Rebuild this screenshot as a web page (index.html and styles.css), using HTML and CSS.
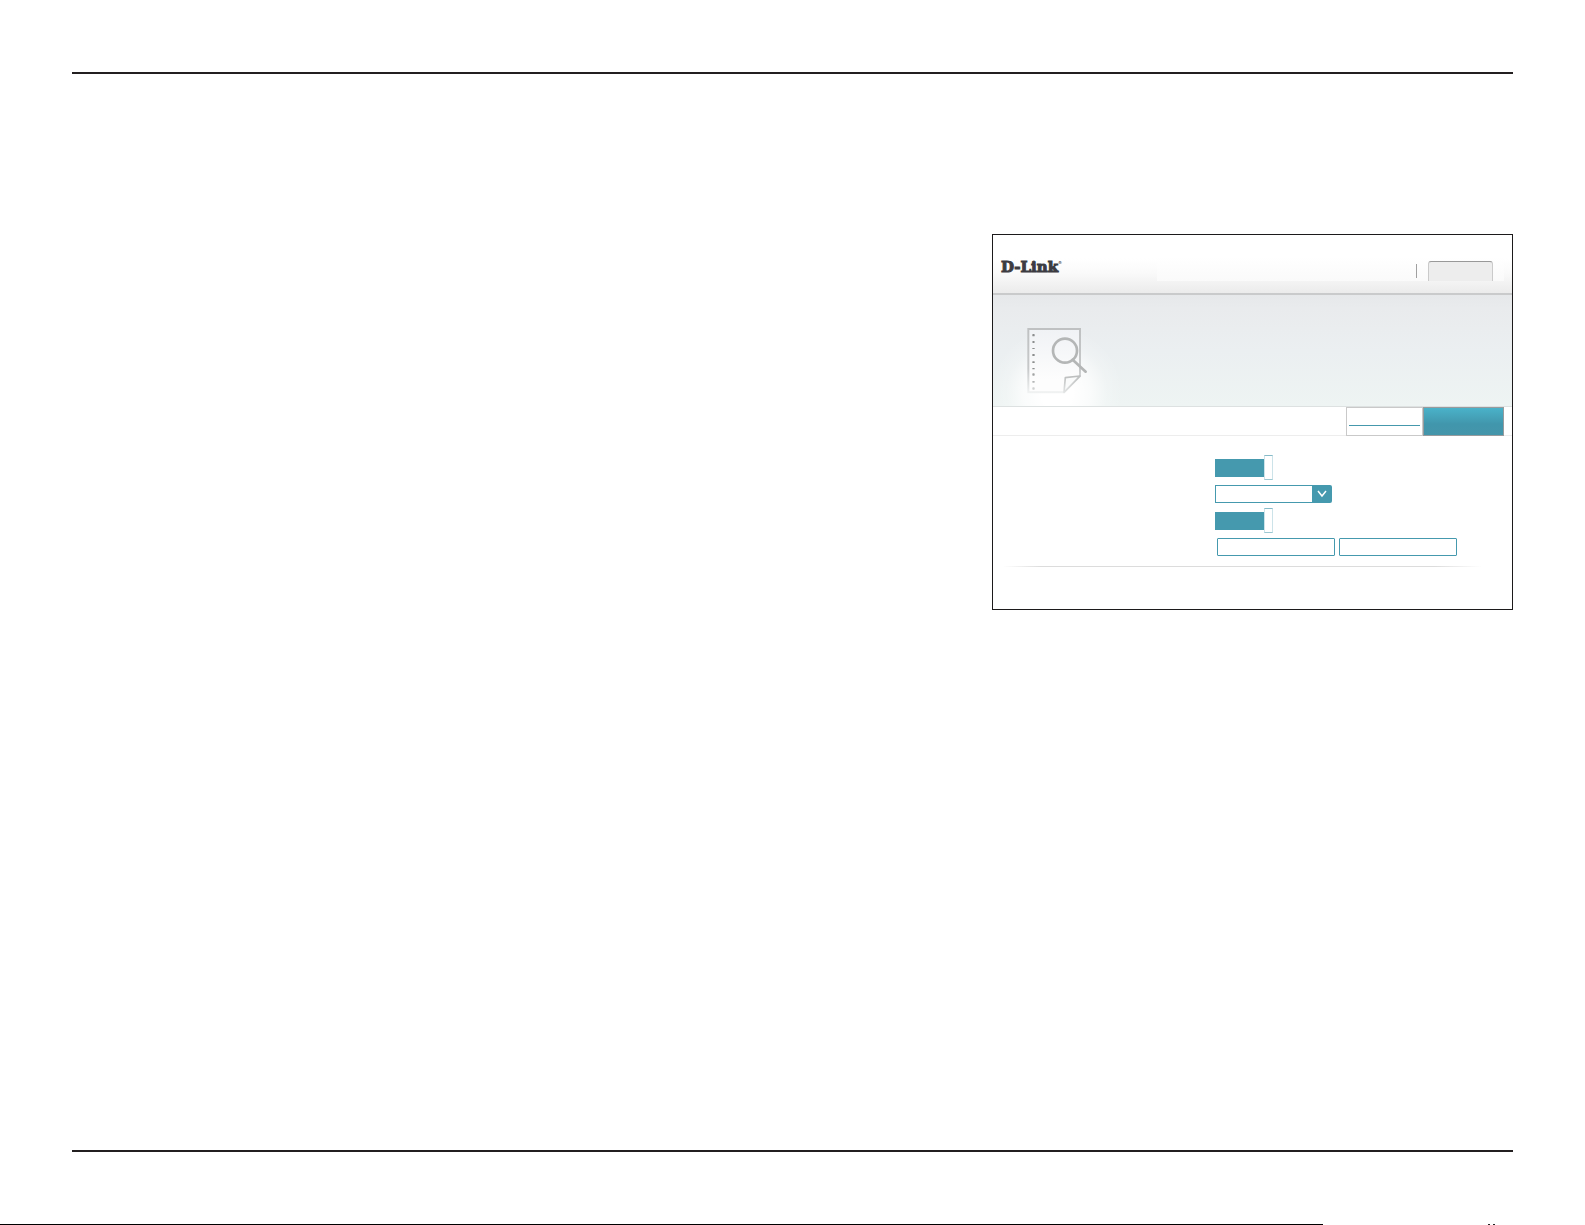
FILE: index.html
```html
<!DOCTYPE html>
<html lang="en">
  <head>
    <meta charset="UTF-8" />
    <meta name="viewport" content="width=device-width, initial-scale=1.0" />
    <title>D-Link</title>
    <link rel="stylesheet" href="styles.css">
  </head>
  <body>
    <main class="page">
      <section class="panel">
        <header class="panel-header">
          <div class="logo">D-Link<sup>®</sup></div>
          <nav class="header-nav">
            <button type="button" class="header-btn" aria-label="Logout"></button>
          </nav>
        </header>

        <div class="banner">
          <svg class="banner-icon" viewBox="123 81 186 204" fill="none" aria-hidden="true">
            <defs>
              <linearGradient id="fade" gradientUnits="userSpaceOnUse" x1="0" y1="87" x2="0" y2="285">
                <stop offset="0" stop-color="#bfc1c2" />
                <stop offset="0.6" stop-color="#c6c8c9" />
                <stop offset="1" stop-color="#f4f6f6" />
              </linearGradient>
              <linearGradient id="fold" gradientUnits="userSpaceOnUse" x1="0" y1="228" x2="0" y2="280">
                <stop offset="0" stop-color="#bcbebe" />
                <stop offset="1" stop-color="#e4e6e6" />
              </linearGradient>
              <linearGradient id="paper" x1="0" y1="0" x2="0" y2="1">
                <stop offset="0" stop-color="#f0f2f5" />
                <stop offset="0.8" stop-color="#fdfdfd" />
              </linearGradient>
            </defs>
            <path d="M130 87H285V228L237 277H130Z" fill="url(#paper)" stroke="url(#fade)" stroke-width="6" />
            <path d="M285 228L241 233L237 277Z" fill="#fafbfb" stroke="url(#fold)" stroke-width="5" stroke-linejoin="round" />
            <g fill="#8c8e8e">
              <rect x="142" y="102" width="7" height="7" rx="2" />
              <rect x="142" y="123" width="7" height="6" rx="2" />
              <rect x="142" y="144" width="7" height="3" />
              <rect x="142" y="162" width="7" height="6" rx="1" />
              <rect x="142" y="184" width="7" height="5" rx="1" />
              <rect x="142" y="204" width="7" height="4" rx="1" />
              <rect x="142" y="220" width="7" height="7" rx="2" fill="#a2a4a4" />
              <rect x="142" y="243" width="7" height="5" rx="1" fill="#b4b6b6" />
              <rect x="142" y="262" width="7" height="7" rx="2" fill="#cfd1d1" />
            </g>
            <circle cx="240" cy="152" r="36" stroke="#b4b6b6" stroke-width="8" />
            <path d="M263 179L302 215" stroke="#b4b6b6" stroke-width="8" stroke-linecap="round" />
          </svg>
        </div>

        <nav class="tabs">
          <a href="#" class="tab" aria-label="Check system log"></a>
          <button type="button" class="tab tab-save" aria-label="Save"></button>
        </nav>

        <form class="settings">
          <input type="checkbox" class="toggle" aria-label="System log" checked />
          <div class="select-box">
            <select aria-label="Log server"></select>
            <svg class="arrow" viewBox="0 0 19 18" fill="none" aria-hidden="true">
              <path d="M5 6L9 11L13 6" stroke="#fff" stroke-width="1.5" />
            </svg>
          </div>
          <input type="checkbox" class="toggle" aria-label="Email notification" checked />
          <div class="actions">
            <button type="button" class="action-btn" aria-label="View"></button>
            <button type="button" class="action-btn" aria-label="Download"></button>
          </div>
        </form>
        <hr class="divider" />
      </section>
    </main>
    <footer class="footer"></footer>
  </body>
</html>
```

FILE: styles.css
```css
*,
*::before,
*::after {
  box-sizing: border-box;
}
body {
  display: flex;
  flex-direction: column;
  min-height: 100vh;
  margin: 0;
  padding-top: 72px;
  font-family: "Liberation Sans", Arial, sans-serif;
  background-color: #fff;
}
.page {
  flex: 1;
  margin: 0 72px;
  padding-top: 160px;
  border-top: 2px solid #231f20;
  border-bottom: 2px solid #231f20;
}
.panel {
  max-width: 521px;
  margin-left: auto;
  padding-bottom: 42px;
  border: 1px solid #1c1a1b;
}
.panel-header {
  display: flex;
  justify-content: space-between;
  align-items: flex-start;
  padding: 22px 8px 12px 8px;
  background: linear-gradient(#fff 40%, #fafafa 65%, #ebebeb);
  border-bottom: 2px solid #c9cacb;
}
.logo {
  color: #3c3b41;
  font-family: "DejaVu Serif", serif;
  font-size: 15px;
  font-weight: bold;
  line-height: 20px;
  -webkit-text-stroke: 1px #3c3b41;
}
.logo sup {
  font-size: 4px;
  line-height: 0;
  vertical-align: 8px;
  -webkit-text-stroke: 0;
}
.header-nav {
  display: flex;
  justify-content: flex-end;
  width: 69%;
  padding: 4px 11px 0 0;
  background: linear-gradient(#fff, #fafafa);
}
.header-nav::before {
  content: "";
  width: 1px;
  height: 14px;
  margin: 3px 11px 0 0;
  background: #a0a0a0;
}
.header-btn {
  width: 65px;
  height: 20px;
  padding: 0;
  background: #ededed;
  border: 1px solid #cacaca;
  border-top-color: #999;
  border-bottom: none;
  border-radius: 3px 3px 0 0;
}
.banner {
  padding: 32px 33px 11px;
  background:
    radial-gradient(circle at 64px 98px, #fff 16px, rgba(255, 255, 255, 0.7) 34px, rgba(255, 255, 255, 0.2) 50px, transparent 66px),
    linear-gradient(#e6e8ea, #e9ebed 12%, #ebeff1 50%, #eef4f3);
  border-bottom: 1px solid #dde1e1;
}
.banner-icon {
  display: block;
  width: 62px;
  height: 68px;
}
.tabs {
  display: flex;
  justify-content: flex-end;
  padding-right: 8px;
  box-shadow: inset 0 -1px #ededed;
}
.tab {
  width: 77px;
  height: 29px;
  padding: 17px 2px 0;
  background: #fff;
  border: 1px solid #c9c9c9;
}
.tab::before {
  content: "";
  display: block;
  height: 1px;
  background: #4598ac;
}
.tab-save {
  width: 81px;
  background: linear-gradient(#4ab2c9, #4196ac 60%, #4495aa);
  border-color: #979b9d;
}
.tab-save::before {
  display: none;
}
.settings {
  display: flex;
  flex-direction: column;
  gap: 5px;
  padding: 19px 0 10px 222px;
}
.toggle {
  appearance: none;
  display: flex;
  justify-content: flex-end;
  width: 58px;
  height: 25px;
  margin: 0;
  background: linear-gradient(#4599ae, #4599ae) 0 4px / 50px 18px no-repeat;
}
.toggle::after {
  content: "";
  width: 9px;
  background: #fff;
  border: 1px solid #cce3e9;
  border-top-color: #87bbc8;
  border-bottom-color: #9cc8d2;
}
.select-box {
  display: flex;
  width: 117px;
  height: 18px;
  background: #4599ae;
  border-radius: 0 2px 2px 0;
}
.select-box select {
  appearance: none;
  flex: 1;
  min-width: 0;
  padding: 0;
  background: #fff;
  border: 1px solid #4599ae;
  border-radius: 0;
}
.arrow {
  width: 19px;
  height: 18px;
}
.actions {
  display: flex;
  gap: 4px;
  padding-left: 2px;
}
.action-btn {
  width: 118px;
  height: 18px;
  padding: 0;
  background: #fff;
  border: 1px solid #4599ae;
  border-radius: 1px;
}
.divider {
  height: 1px;
  margin: 0 30px 0 10px;
  border: none;
  background: linear-gradient(to right, transparent, #dcdcdc 8%, #dcdcdc 90%, transparent);
}
.footer {
  display: flex;
  justify-content: space-between;
  align-items: flex-end;
  height: 73px;
}
.footer::before {
  content: "";
  width: 1323px;
  max-width: 84%;
  height: 1px;
  background: #000;
}
.footer::after {
  content: "";
  width: 97px;
  height: 1px;
  background: linear-gradient(to right, #222 2px, transparent 2px 5px, #222 5px 7px, transparent 7px);
}
```
